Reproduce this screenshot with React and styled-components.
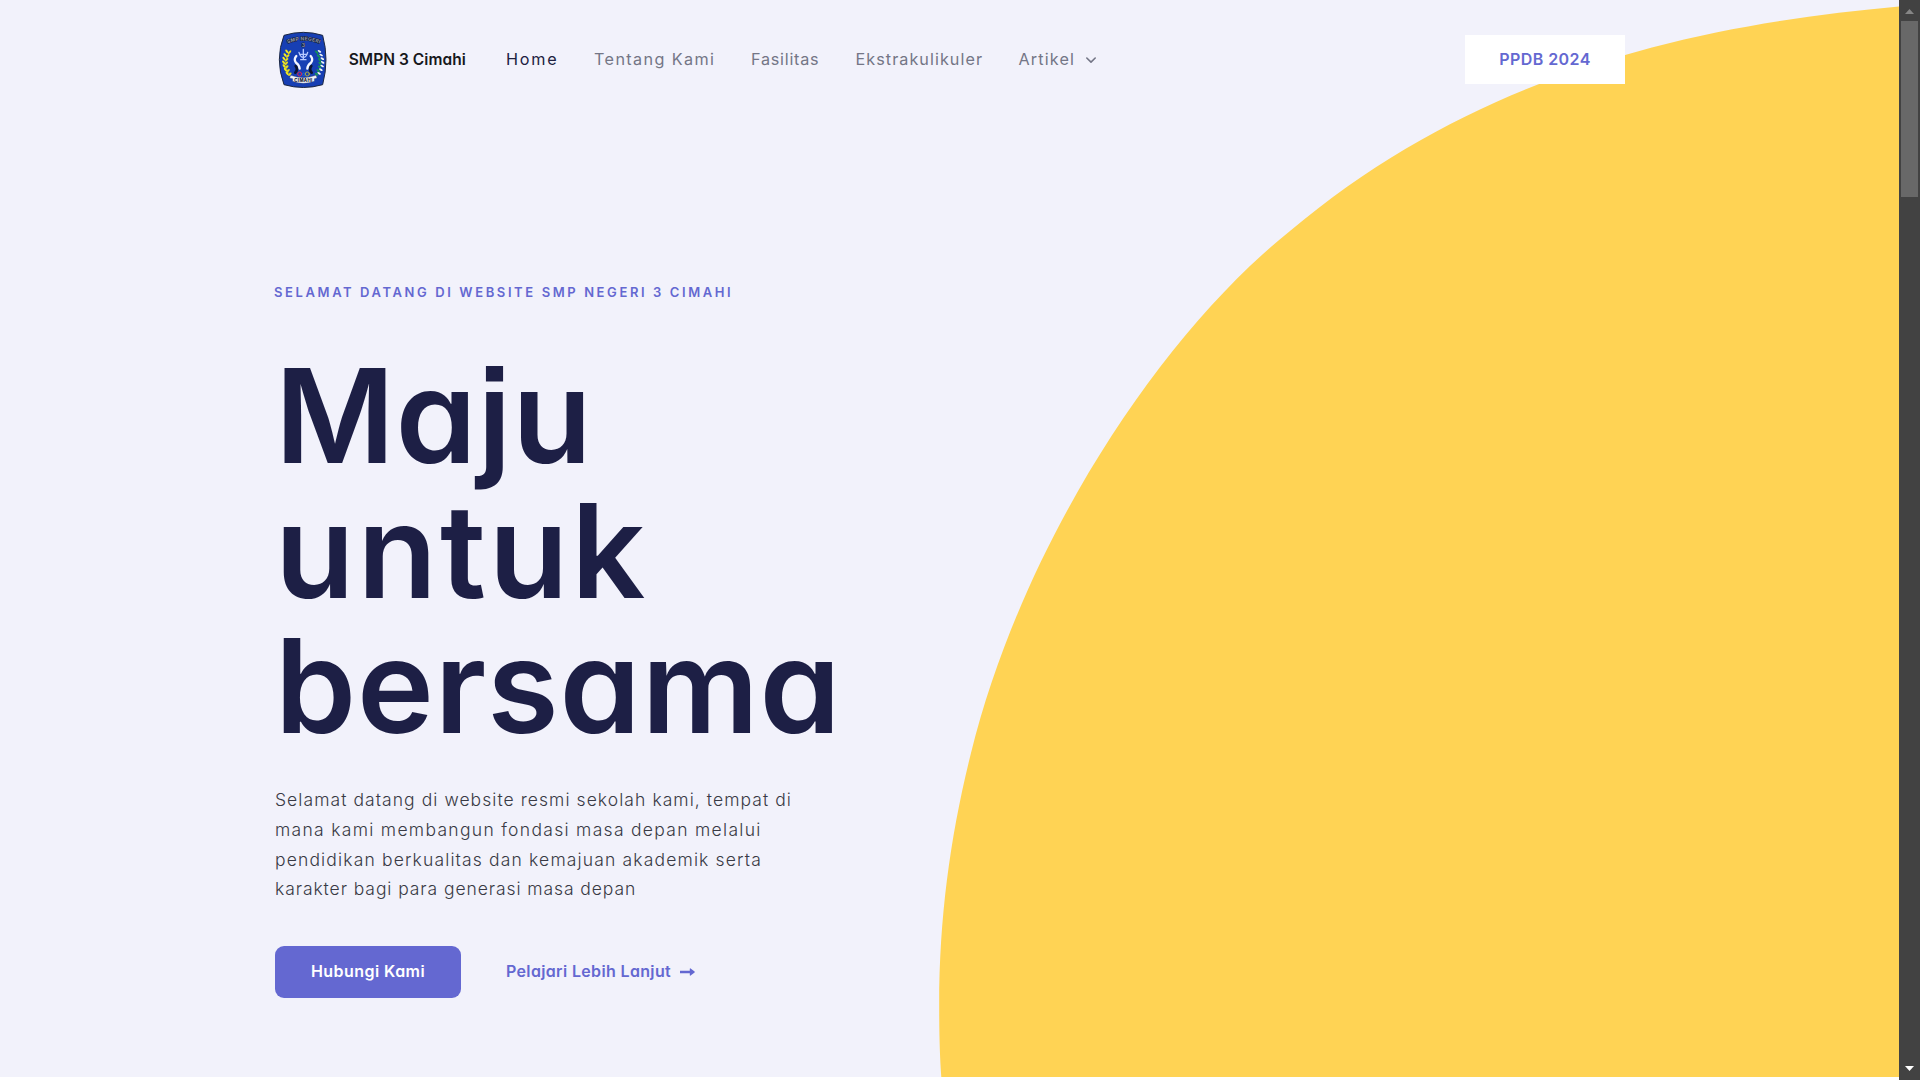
import React from "react";
import styled, { createGlobalStyle } from "styled-components";

const GlobalStyle = createGlobalStyle`
  *, *::before, *::after { box-sizing: border-box; }
  body { margin: 0; background: #fff; overflow: hidden; }
  a { color: inherit; text-decoration: none; }
`;

const display = `
  font-family: Inter, "Open Sans", sans-serif;
  font-feature-settings: "cv11", "ss07";
  font-weight: 600;
`;

const Window = styled.div`
  display: flex;
  width: 1920px;
  height: 1080px;
  overflow: hidden;
  font-family: Inter, "Open Sans", sans-serif;
`;

const Page = styled.div`
  position: relative;
  isolation: isolate;
  flex: 1;
  height: 1077px;
  overflow: hidden;
  background: #f2f2fb;
`;

const Blob = styled.svg`
  position: absolute;
  inset: 0;
  z-index: -1;
  width: 1899px;
  height: 1077px;
`;

const Header = styled.header`
  display: flex;
  align-items: center;
  height: 119px;
  padding: 0 274px;
`;

const Brand = styled.a`
  display: flex;
  align-items: center;
  gap: 18px;
  width: 232px;
  color: #17181c;
  ${display}
  font-size: 15.5px;
  line-height: 24px;
  letter-spacing: 0.05px;
  white-space: nowrap;
`;

const Crest = styled.svg`
  flex: none;
  width: 56.67px;
  height: 60px;
`;

const Nav = styled.nav`
  display: flex;
  align-items: center;
  padding-bottom: 2px;
`;

const NavLink = styled.a`
  display: flex;
  align-items: center;
  width: ${(p) => p.$width}px;
  color: ${(p) => (p.$active ? "#20213f" : "#747686")};
  font-size: 16.2px;
  line-height: 24px;
  letter-spacing: ${(p) => p.$tracking}px;
  white-space: nowrap;

  svg { margin: 2px 0 0 10px; }
`;

const HeaderButton = styled.a`
  display: flex;
  align-items: center;
  justify-content: center;
  width: 160px;
  height: 49px;
  margin-left: auto;
  padding-bottom: 2px;
  background: #fff;
  color: #6468d1;
  ${display}
  font-size: 16px;
  letter-spacing: 0.45px;
`;

const Hero = styled.main`
  display: flex;
  flex-direction: column;
  align-items: flex-start;
  padding: 163px 0 0 275px;
`;

const Eyebrow = styled.p`
  margin: 0 0 0 -1px;
  color: #6468d1;
  ${display}
  font-size: 13px;
  line-height: 20px;
  letter-spacing: 2.6px;
  text-transform: uppercase;
  white-space: nowrap;
`;

const Title = styled.h1`
  margin: 46px 0 0;
  color: #1d1f45;
  ${display}
  font-size: 130px;
  line-height: 135px;
`;

const TitleLine = styled.span`
  display: block;
  letter-spacing: ${(p) => p.$tracking}px;
`;

const Lead = styled.p`
  margin: 32px 0 0;
  color: #393a45;
  font-size: 17.5px;
  font-weight: 300;
  line-height: 29.75px;
`;

const LeadLine = styled.span`
  display: block;
  letter-spacing: ${(p) => p.$tracking}px;
  white-space: nowrap;
`;

const Actions = styled.div`
  display: flex;
  align-items: center;
  gap: 45px;
  margin-top: 42px;
`;

const PrimaryButton = styled.a`
  display: flex;
  align-items: center;
  justify-content: center;
  width: 186px;
  height: 52px;
  padding-bottom: 2px;
  border-radius: 9px;
  background: #6468d1;
  color: #fff;
  ${display}
  font-size: 16px;
  letter-spacing: 0.45px;
`;

const TextLink = styled.a`
  display: flex;
  align-items: center;
  gap: 9px;
  padding-bottom: 2px;
  color: #6468d1;
  ${display}
  font-size: 16px;
  letter-spacing: 0.35px;
  white-space: nowrap;

  svg { margin-top: 1px; }
`;

const Scrollbar = styled.div`
  display: flex;
  flex-direction: column;
  align-items: center;
  width: 21px;
  height: 1080px;
  padding: 9px 1px 9px 0;
  background: #424242;
`;

const ScrollArrow = styled.svg`
  flex: none;
  width: 9px;
  height: 5px;
  fill: ${(p) => p.$color};
`;

const Thumb = styled.div`
  width: 17px;
  height: 176px;
  margin: 7px 0 auto;
  background: #686868;
`;

const leaves = [0, 1, 2, 3, 4, 5, 6];

function Logo() {
  return (
    <Crest viewBox="30 30 170 180">
      <path d="M60 46 Q118 28 176 46 Q196 118 176 194 Q118 211 60 194 Q32 118 60 46Z" fill="#173fb4" stroke="#1c2740" strokeWidth="3" />
      <path id="crestArc" d="M68 72 Q118 50 170 72" fill="none" />
      <text fontFamily="Inter, sans-serif" fontWeight="700" fontSize="15" fill="#8f95a5" stroke="#15203c" strokeWidth="3" paintOrder="stroke">
        <textPath href="#crestArc" startOffset="50%" textAnchor="middle" textLength="98">SMP NEGERI</textPath>
      </text>
      <text x="118" y="81" textAnchor="middle" fontFamily="Inter, sans-serif" fontWeight="700" fontSize="15" fill="#8f95a5" stroke="#15203c" strokeWidth="3" paintOrder="stroke">3</text>
      <g fill="none" strokeLinecap="round">
        <path d="M80 92 Q50 128 78 164" stroke="#8c8f35" strokeWidth="3" />
        <path d="M154 92 Q184 128 158 164" stroke="#0f7a53" strokeWidth="3" />
      </g>
      {leaves.map((i) => {
        const y = 94 + i * 11;
        const bend = Math.sin(((i + 0.6) / 7) * Math.PI) * 13;
        return (
          <g key={i}>
            <ellipse cx={72 - bend} cy={y} rx="6.5" ry="3.2" fill="#f2ea1c" transform={`rotate(50 ${72 - bend} ${y})`} />
            <ellipse cx={80 - bend} cy={y + 3} rx="6.5" ry="3" fill="#e6dc22" transform={`rotate(-45 ${80 - bend} ${y + 3})`} />
            <ellipse cx={163 + bend} cy={y} rx="6" ry="2.8" fill="#f2f8f4" transform={`rotate(30 ${163 + bend} ${y})`} />
            <ellipse cx={155 + bend} cy={y + 3} rx="6" ry="3" fill="#16925a" transform={`rotate(40 ${155 + bend} ${y + 3})`} />
          </g>
        );
      })}
      <g fill="none" strokeLinecap="round">
        <path d="M95 138 Q103 148 94 158" stroke="#0c1530" strokeWidth="8" />
        <path d="M142 138 Q134 148 143 158" stroke="#0c1530" strokeWidth="8" />
        <path d="M97 108 Q88 118 96 128 Q106 134 107 146" stroke="#f4f6ff" strokeWidth="7" />
        <path d="M140 108 Q149 118 141 128 Q131 134 130 146" stroke="#f4f6ff" strokeWidth="7" />
        <path d="M105 97 Q109 112 118 112 Q127 112 131 97 M118 88 V119 M109 103 H127 M110 119 H126" stroke="#b9caff" strokeWidth="4" />
        <circle cx="107" cy="162" r="6" stroke="#dc2450" strokeWidth="3" />
        <circle cx="119" cy="163" r="4" stroke="#2267cc" strokeWidth="3" />
        <circle cx="130" cy="162" r="6" stroke="#a9a83a" strokeWidth="3" />
      </g>
      <path d="M80 166 Q118 180 156 166 L159 174 L151 176 L151 184 Q118 196 86 184 L86 176 L77 174Z" fill="#f3f4f7" stroke="#3e4658" strokeWidth="1" />
      <text x="118" y="186" textAnchor="middle" fontFamily="Inter, sans-serif" fontWeight="800" fontSize="13" textLength="54" fill="#1c2230">CIMAHI</text>
    </Crest>
  );
}

const links = [
  { label: "Home", width: 88, tracking: 1.75, active: true },
  { label: "Tentang Kami", width: 157, tracking: 1.38 },
  { label: "Fasilitas", width: 104.5, tracking: 0.75 },
  { label: "Ekstrakulikuler", width: 163, tracking: 1.05 },
  { label: "Artikel", width: 90, tracking: 1.15, menu: true },
];

const lead = [
  ["Selamat datang di website resmi sekolah kami, tempat di", 1.06],
  ["mana kami membangun fondasi masa depan melalui", 1.3],
  ["pendidikan berkualitas dan kemajuan akademik serta", 1.15],
  ["karakter bagi para generasi masa depan", 0.92],
];

export default function App() {
  return (
    <Window>
      <GlobalStyle />
      <Page>
        <Blob viewBox="0 0 1899 1077">
          <path
            fill="#ffd354"
            d="M1899 6.5 C1699 24.5 1480 71 1290 231 C1160 335 1023 543 971 753 C951 833 939.2 915 939.2 1005 C939.2 1035 939.8 1055 941.3 1077 H1899Z"
          />
        </Blob>
        <Header>
          <Brand href="#">
            <Logo />
            SMPN 3 Cimahi
          </Brand>
          <Nav>
            {links.map((l) => (
              <NavLink key={l.label} href="#" $width={l.width} $tracking={l.tracking} $active={l.active}>
                {l.label}
                {l.menu && (
                  <svg width="12" height="8" viewBox="0 0 12 8" fill="none" stroke="#747686" strokeWidth="1.6" strokeLinecap="round" strokeLinejoin="round">
                    <path d="M1.8 2 L6 6.1 L10.2 2" />
                  </svg>
                )}
              </NavLink>
            ))}
          </Nav>
          <HeaderButton href="#">PPDB 2024</HeaderButton>
        </Header>
        <Hero>
          <Eyebrow>Selamat datang di website SMP Negeri 3 Cimahi</Eyebrow>
          <Title>
            <TitleLine $tracking={0.7}>Maju</TitleLine>
            <TitleLine $tracking={2.9}>untuk</TitleLine>
            <TitleLine $tracking={0.9}>bersama</TitleLine>
          </Title>
          <Lead>
            {lead.map(([text, tracking]) => (
              <LeadLine key={text} $tracking={tracking}>{text}</LeadLine>
            ))}
          </Lead>
          <Actions>
            <PrimaryButton href="#">Hubungi Kami</PrimaryButton>
            <TextLink href="#">
              Pelajari Lebih Lanjut
              <svg width="15" height="8" viewBox="0 0 15 8" fill="#6468d1">
                <path d="M0 2.8 H9.8 V0.9 Q9.8 0 10.6 0.5 L14.6 3.5 Q15 4 14.6 4.5 L10.6 7.5 Q9.8 8 9.8 7.1 V5.2 H0Z" />
              </svg>
            </TextLink>
          </Actions>
        </Hero>
      </Page>
      <Scrollbar>
        <ScrollArrow $color="#868686" viewBox="0 0 9 5"><path d="M4.5 0 L9 5 H0Z" /></ScrollArrow>
        <Thumb />
        <ScrollArrow $color="#ffffff" viewBox="0 0 9 5"><path d="M0 0 H9 L4.5 5Z" /></ScrollArrow>
      </Scrollbar>
    </Window>
  );
}
